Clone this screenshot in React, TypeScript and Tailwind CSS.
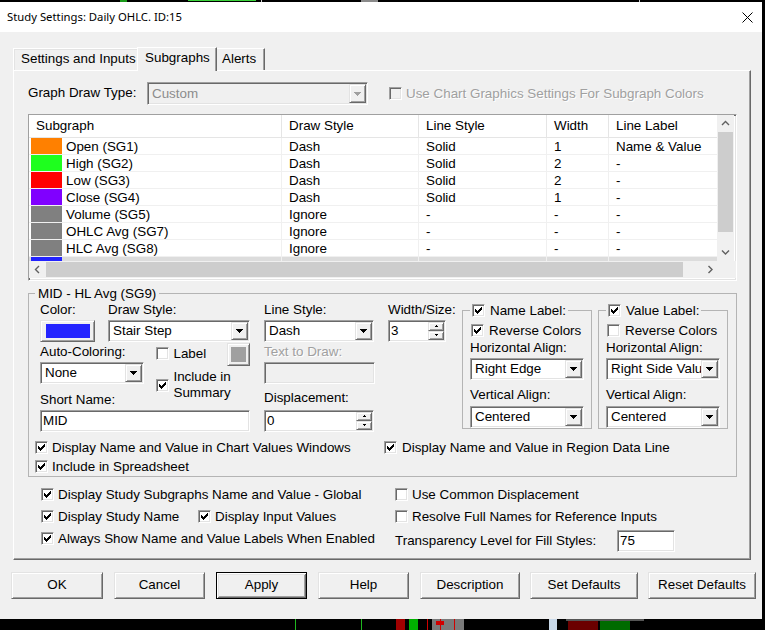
import React from 'react';

const SUNKEN =
  'border border-t-[#a0a0a0] border-l-[#a0a0a0] border-r-white border-b-white shadow-[inset_1px_1px_0_#696969,inset_-1px_-1px_0_#e3e3e3]';
const RAISED =
  'border border-t-[#e3e3e3] border-l-[#e3e3e3] border-r-[#696969] border-b-[#696969] shadow-[inset_1px_1px_0_#ffffff,inset_-1px_-1px_0_#a0a0a0] bg-[#f0f0f0]';
const DIS = 'text-[#a0a0a0] [text-shadow:1px_1px_0_#ffffff]';

function CheckMark() {
  return (
    <svg width="7" height="7" viewBox="0 0 7 7" shapeRendering="crispEdges">
      <path
        d="M6 0h1v1h-1zM5 1h2v1h-2zM0 2h1v1h-1zM4 2h3v1h-3zM0 3h2v1h-2zM3 3h3v1h-3zM0 4h5v1h-5zM1 5h3v1h-3zM2 6h1v1h-1z"
        fill="#000"
      />
    </svg>
  );
}

function Box({ checked = false, disabled = false }: { checked?: boolean; disabled?: boolean }) {
  return (
    <span
      className={`w-[13px] h-[13px] shrink-0 flex items-center justify-center ${SUNKEN} ${
        disabled ? 'bg-[#f0f0f0]' : 'bg-white'
      }`}
    >
      {checked && <CheckMark />}
    </span>
  );
}

function CB({
  label,
  checked = false,
  disabled = false,
  className = '',
}: {
  label: React.ReactNode;
  checked?: boolean;
  disabled?: boolean;
  className?: string;
}) {
  return (
    <div className={`flex items-center h-[15px] gap-[4px] ${className}`}>
      <Box checked={checked} disabled={disabled} />
      <span className={`whitespace-nowrap leading-[15px] ${disabled ? DIS : ''}`}>{label}</span>
    </div>
  );
}

function DownTri({ color = '#000' }: { color?: string }) {
  return (
    <svg width="7" height="4" viewBox="0 0 7 4" shapeRendering="crispEdges">
      <path d="M0 0h7v1h-7zM1 1h5v1h-5zM2 2h3v1h-3zM3 3h1v1h-1z" fill={color} />
    </svg>
  );
}

function TinyUp() {
  return (
    <svg width="5" height="3" viewBox="0 0 5 3" shapeRendering="crispEdges">
      <path d="M2 0h1v1h-1zM1 1h3v1h-3z" fill="#000" />
    </svg>
  );
}
function TinyDown() {
  return (
    <svg width="5" height="3" viewBox="0 0 5 3" shapeRendering="crispEdges">
      <path d="M1 0h3v1h-3zM2 1h1v1h-1z" fill="#000" />
    </svg>
  );
}

function Combo({
  value,
  className = '',
  disabled = false,
  tall = false,
}: {
  value: string;
  className?: string;
  disabled?: boolean;
  tall?: boolean;
}) {
  return (
    <div
      className={`${tall ? 'h-[23px]' : 'h-[22px]'} flex shrink-0 ${SUNKEN} ${
        disabled ? 'bg-[#f0f0f0]' : 'bg-white'
      } ${className}`}
    >
      <span
        className={`flex-1 min-w-0 pl-[4px] ${tall ? 'leading-[21px]' : 'leading-[20px]'} whitespace-nowrap overflow-hidden ${
          disabled ? 'text-[#8c8c8c]' : ''
        }`}
      >
        {value}
      </span>
      <span
        className={`w-[17px] ${tall ? 'h-[19px]' : 'h-[18px]'} mt-[1px] mr-[1px] flex items-center justify-center ${RAISED}`}
      >
        <DownTri color={disabled ? '#a0a0a0' : '#000'} />
      </span>
    </div>
  );
}

function Spin({ value, className = '' }: { value: string; className?: string }) {
  return (
    <div className={`h-[22px] flex bg-white shrink-0 ${SUNKEN} ${className}`}>
      <span className="flex-1 pl-[2px] leading-[20px]">{value}</span>
      <div className="w-[16px] h-[18px] mt-[1px] mr-[1px] flex flex-col">
        <span className={`h-[9px] flex items-center justify-center ${RAISED}`}>
          <TinyUp />
        </span>
        <span className={`h-[9px] flex items-center justify-center ${RAISED}`}>
          <TinyDown />
        </span>
      </div>
    </div>
  );
}

function Field({
  value = '',
  className = '',
  disabled = false,
}: {
  value?: string;
  className?: string;
  disabled?: boolean;
}) {
  return (
    <div
      className={`h-[22px] shrink-0 pl-[2px] leading-[20px] ${SUNKEN} ${
        disabled ? 'bg-[#f0f0f0]' : 'bg-white'
      } ${className}`}
    >
      {value}
    </div>
  );
}

function Label({ children, className = '' }: { children: React.ReactNode; className?: string }) {
  return <div className={`h-[18px] leading-[15px] whitespace-nowrap ${className}`}>{children}</div>;
}

function Chevron({ dir }: { dir: 'up' | 'down' | 'left' | 'right' }) {
  const pts = {
    up: '1,5 4.5,1.5 8,5',
    down: '1,1.5 4.5,5 8,1.5',
    left: '5,1 1.5,4.5 5,8',
    right: '1.5,1 5,4.5 1.5,8',
  }[dir];
  const w = dir === 'up' || dir === 'down' ? 9 : 7;
  const h = dir === 'up' || dir === 'down' ? 7 : 9;
  return (
    <svg width={w} height={h} viewBox={`0 0 ${w} ${h}`}>
      <polyline points={pts} fill="none" stroke="#606060" strokeWidth="1.4" />
    </svg>
  );
}

const rows = [
  { c: '#ff8000', n: 'Open (SG1)', d: 'Dash', l: 'Solid', w: '1', lab: 'Name & Value' },
  { c: '#1eff1e', n: 'High (SG2)', d: 'Dash', l: 'Solid', w: '2', lab: '-' },
  { c: '#ff0000', n: 'Low (SG3)', d: 'Dash', l: 'Solid', w: '2', lab: '-' },
  { c: '#8000ff', n: 'Close (SG4)', d: 'Dash', l: 'Solid', w: '1', lab: '-' },
  { c: '#808080', n: 'Volume (SG5)', d: 'Ignore', l: '-', w: '-', lab: '-' },
  { c: '#808080', n: 'OHLC Avg (SG7)', d: 'Ignore', l: '-', w: '-', lab: '-' },
  { c: '#808080', n: 'HLC Avg (SG8)', d: 'Ignore', l: '-', w: '-', lab: '-' },
  { c: '#2222ff', n: 'MID - HL Avg (SG9)', d: 'Stair Step', l: 'Dash', w: '3', lab: 'Name & Value' },
];

function Table() {
  return (
    <div className={`mt-[9px] w-[709px] h-[167px] flex flex-col bg-white ${SUNKEN}`}>
      <div className="flex h-[146px]">
        <div className="w-[688px] overflow-hidden">
          <div className="flex h-[23px] border-b border-[#e5e5e5] bg-white">
            <div className="w-[253px] shrink-0 pl-[7px] leading-[22px] border-r border-[#e5e5e5]">Subgraph</div>
            <div className="w-[137px] shrink-0 pl-[7px] leading-[22px] border-r border-[#e5e5e5]">Draw Style</div>
            <div className="w-[128px] shrink-0 pl-[7px] leading-[22px] border-r border-[#e5e5e5]">Line Style</div>
            <div className="w-[62px] shrink-0 pl-[7px] leading-[22px] border-r border-[#e5e5e5]">Width</div>
            <div className="w-[120px] shrink-0 pl-[7px] leading-[22px] border-r border-[#e5e5e5]">Line Label</div>
          </div>
          {rows.map((r, i) => (
            <div
              key={i}
              className={`flex h-[17px] border-b border-[#f0f0f0] ${i === 7 ? 'bg-[#dcdcdc]' : 'bg-white'}`}
            >
              <div className="w-[253px] shrink-0 flex border-r border-[#f0f0f0]">
                <span className="ml-[2px] w-[31px] h-[16px] shrink-0" style={{ backgroundColor: r.c }} />
                <span className="ml-[4px] leading-[17px] whitespace-nowrap">{r.n}</span>
              </div>
              <div className="w-[137px] shrink-0 pl-[7px] leading-[17px] border-r border-[#f0f0f0]">{r.d}</div>
              <div className="w-[128px] shrink-0 pl-[7px] leading-[17px] border-r border-[#f0f0f0]">{r.l}</div>
              <div className="w-[62px] shrink-0 pl-[7px] leading-[17px] border-r border-[#f0f0f0]">{r.w}</div>
              <div className="w-[120px] shrink-0 pl-[7px] leading-[17px] whitespace-nowrap">{r.lab}</div>
            </div>
          ))}
        </div>
        <div className="w-[17px] bg-[#f0f0f0] flex flex-col">
          <div className="h-[17px] flex items-center justify-center">
            <Chevron dir="up" />
          </div>
          <div className="h-[100px] mx-[1px] bg-[#cdcdcd]" />
          <div className="flex-1" />
          <div className="h-[17px] flex items-center justify-center">
            <Chevron dir="down" />
          </div>
        </div>
      </div>
      <div className="flex h-[17px] bg-[#f0f0f0]">
        <div className="w-[17px] flex items-center justify-center">
          <Chevron dir="left" />
        </div>
        <div className="w-[637px] my-[1px] bg-[#cdcdcd]" />
        <div className="flex-1" />
        <div className="w-[17px] flex items-center justify-center">
          <Chevron dir="right" />
        </div>
        <div className="w-[17px]" />
      </div>
    </div>
  );
}

function LabelGroup({
  title,
  titleChecked,
  reverse,
  hAlign,
  className = '',
}: {
  title: string;
  titleChecked: boolean;
  reverse: boolean;
  hAlign: string;
  className?: string;
}) {
  return (
    <div className={`relative mt-[8px] w-[130px] h-[119px] border border-[#b4b4b4] flex flex-col pl-[7px] ${className}`}>
      <div className="absolute -top-[8px] left-[7px] px-[2px] bg-[#f0f0f0]">
        <CB label={title} checked={titleChecked} className="gap-[5px]" />
      </div>
      <CB label="Reverse Colors" checked={reverse} className="mt-[12px] ml-[1px] gap-[5px]" />
      <div className="mt-[2px] h-[15px] leading-[15px] whitespace-nowrap">Horizontal Align:</div>
      <Combo value={hAlign} className="mt-[3px] w-[114px]" />
      <div className="mt-[7px] h-[15px] leading-[15px] whitespace-nowrap">Vertical Align:</div>
      <Combo value="Centered" className="mt-[4px] w-[114px]" />
    </div>
  );
}

function GroupBox() {
  return (
    <div className="mt-[12px] relative w-[709px] h-[184px] border border-[#b4b4b4] flex flex-col">
      <div className="absolute -top-[8px] left-[6px] px-[3px] bg-[#f0f0f0] leading-[15px]">MID - HL Avg (SG9)</div>
      <div className="pt-[8px] pl-[11px] flex">
        {/* col 1 */}
        <div className="w-[210px] flex flex-col">
          <div className="flex h-[40px]">
            <div className="w-[68px] flex flex-col">
              <Label>Color:</Label>
              <div className={`w-[55px] h-[22px] flex items-center justify-center ${RAISED}`}>
                <span className="w-[44px] h-[14px] bg-[#2424ff]" />
              </div>
            </div>
            <div className="w-[142px] flex flex-col">
              <Label>Draw Style:</Label>
              <Combo value="Stair Step" className="w-[142px]" />
            </div>
          </div>
          <div className="mt-[2px] h-[48px] flex">
            <div className="w-[117px] flex flex-col">
              <Label>Auto-Coloring:</Label>
              <Combo value="None" className="w-[104px]" />
            </div>
            <div className="w-[94px] -mt-[1px] flex flex-col">
              <div className="h-[23px] flex items-start">
                <CB label="Label" className="mt-[3px] gap-[4px]" />
                <div className={`ml-auto w-[23px] h-[23px] flex items-center justify-center ${RAISED}`}>
                  <span className="w-[15px] h-[15px] bg-[#a0a0a0]" />
                </div>
              </div>
              <div className="mt-[3px] flex items-center gap-[4px]">
                <Box checked />
                <span className="leading-[16px]">
                  Include in
                  <br />
                  Summary
                </span>
              </div>
            </div>
          </div>
          <div className="h-[40px] flex flex-col">
            <Label>Short Name:</Label>
            <Field value="MID" className="w-[210px]" />
          </div>
        </div>
        {/* col 2 */}
        <div className="ml-[14px] w-[111px] flex flex-col">
          <Label>Line Style:</Label>
          <Combo value="Dash" className="w-[110px]" />
          <Label className={`mt-[2px] ${DIS}`}>Text to Draw:</Label>
          <Field disabled className="w-[111px]" />
          <div className="mt-[6px] h-[20px] leading-[15px]">Displacement:</div>
          <Spin value="0" className="w-[110px]" />
        </div>
        {/* col 3 */}
        <div className="ml-[13px] w-[58px] flex flex-col">
          <Label>Width/Size:</Label>
          <Spin value="3" className="w-[58px]" />
        </div>
        <LabelGroup title="Name Label:" titleChecked reverse hAlign="Right Edge" className="ml-[16px]" />
        <LabelGroup title="Value Label:" titleChecked reverse={false} hAlign="Right Side Value" className="ml-[6px]" />
      </div>
      <div className="mt-[8px] pl-[6px] flex">
        <div className="w-[349px]">
          <CB label="Display Name and Value in Chart Values Windows" checked />
        </div>
        <CB label="Display Name and Value in Region Data Line" checked className="gap-[5px]" />
      </div>
      <div className="mt-[4px] pl-[6px]">
        <CB label="Include in Spreadsheet" checked />
      </div>
    </div>
  );
}

function Btn({ children, className = '', def = false }: { children: React.ReactNode; className?: string; def?: boolean }) {
  return (
    <div
      className={`h-[27px] shrink-0 flex items-center justify-center bg-[#f0f0f0] ${
        def
          ? 'border border-black shadow-[inset_1px_1px_0_#ffffff,inset_-1px_-1px_0_#696969,inset_2px_2px_0_#e3e3e3,inset_-2px_-2px_0_#a0a0a0]'
          : RAISED
      } ${className}`}
    >
      {children}
    </div>
  );
}

export default function App() {
  return (
    <div className="relative w-[765px] h-[630px] bg-black overflow-hidden pt-[2px] text-[13.4px] text-black font-['Liberation_Sans',Arial,sans-serif]">
      {/* chart behind the dialog: top strip */}
      <div className="absolute top-0 left-[120px] w-[7px] h-[2px] bg-[#1a9a1a]" />
      <div className="absolute top-0 left-[188px] w-[68px] h-[1px] bg-[#3ad33a]" />
      <div className="absolute top-0 left-[261px] w-[1px] h-[2px] bg-[#d0d0d0]" />
      <div className="absolute top-0 left-[361px] w-[17px] h-[2px] bg-[#8a8a8a]" />
      <div className="absolute top-0 left-[639px] w-[1px] h-[2px] bg-[#d0d0d0]" />
      {/* bottom strip */}
      <div className="absolute top-[619px] left-[295px] w-[1px] h-[11px] bg-[#1fb81f]" />
      <div className="absolute top-[619px] left-[361px] w-[1px] h-[11px] bg-[#1fb81f]" />
      <div className="absolute top-[619px] left-[396px] w-[9px] h-[11px] bg-[#a00000]" />
      <div className="absolute top-[619px] left-[409px] w-[9px] h-[11px] bg-[#00b000]" />
      <div className="absolute top-[619px] left-[427px] w-[1px] h-[11px] bg-[#d00000]" />
      <div className="absolute top-[619px] left-[432px] w-[32px] h-[11px] bg-[#7a7a7a]" />
      <div className="absolute top-[621px] left-[436px] w-[8px] h-[4px] bg-[#d00000]" />
      <div className="absolute top-[619px] left-[440px] w-[1px] h-[11px] bg-[#d00000]" />
      <div className="absolute top-[619px] left-[454px] w-[1px] h-[11px] bg-[#d00000]" />
      <div className="absolute top-[619px] left-[549px] w-[8px] h-[11px] bg-[#c8d8e8]" />
      <div className="absolute top-[619px] left-[566px] w-[78px] h-[2px] bg-[#555555]" />
      <div className="absolute top-[621px] left-[568px] w-[30px] h-[9px] bg-[#6b0000]" />
      <div className="absolute top-[621px] left-[600px] w-[30px] h-[9px] bg-[#006b00]" />

      <div className="relative w-[762px] h-[617px] bg-[#f0f0f0] flex flex-col">
        {/* title bar */}
        <div className="h-[30px] bg-white flex items-center pl-[7px] pr-[9px]">
          <span className="text-[11.3px] font-['Noto_Sans',sans-serif] leading-[16px]">
            Study Settings: Daily OHLC. ID:15
          </span>
          <svg className="ml-auto" width="11" height="11" viewBox="0 0 11 11">
            <path d="M0.5 0.5 L10.5 10.5 M10.5 0.5 L0.5 10.5" stroke="#000" strokeWidth="1" />
          </svg>
        </div>

        {/* tabs */}
        <div className="relative z-10 mt-[15px] ml-[13px] h-[23px] flex items-end">
          <div className="h-[22px] w-[126px] pl-[7px] flex items-center border-t border-l border-white shadow-[inset_1px_1px_0_#e3e3e3] whitespace-nowrap">
            Settings and Inputs
          </div>
          <div className="relative z-10 -ml-[2px] -mb-[1px] h-[24px] w-[80px] pl-[7px] pb-[3px] flex items-center bg-[#f0f0f0] border-t border-l border-white border-r border-r-[#696969] shadow-[inset_-1px_0_0_#a0a0a0] whitespace-nowrap">
            Subgraphs
          </div>
          <div className="h-[22px] w-[48px] pl-[5px] flex items-center border-t border-white border-r border-r-[#696969] shadow-[inset_-1px_0_0_#a0a0a0] whitespace-nowrap">
            Alerts
          </div>
        </div>

        {/* panel */}
        <div className="ml-[13px] w-[738px] h-[490px] shrink-0 border border-t-white border-l-white border-r-[#696969] border-b-[#696969] shadow-[inset_-1px_-1px_0_#a0a0a0] flex flex-col pl-[14px]">
          <div className="mt-[11px] h-[23px] flex items-center">
            <div className="w-[119px] whitespace-nowrap">Graph Draw Type:</div>
            <Combo value="Custom" disabled tall className="w-[221px]" />
            <CB label="Use Chart Graphics Settings For Subgraph Colors" disabled className="ml-[21px] gap-[4px]" />
          </div>
          <Table />
          <GroupBox />
          <div className="mt-[10px] pl-[13px] flex">
            <div className="w-[354px] flex flex-col gap-[7px]">
              <CB label="Display Study Subgraphs Name and Value - Global" checked />
              <div className="flex">
                <div className="w-[157px]">
                  <CB label="Display Study Name" checked />
                </div>
                <CB label="Display Input Values" checked />
              </div>
              <CB label="Always Show Name and Value Labels When Enabled" checked />
            </div>
            <div className="flex flex-col">
              <CB label="Use Common Displacement" />
              <CB label="Resolve Full Names for Reference Inputs" className="mt-[7px]" />
              <div className="mt-[6px] h-[22px] flex items-center">
                <div className="w-[222px] whitespace-nowrap">Transparency Level for Fill Styles:</div>
                <Field value="75" className="w-[58px]" />
              </div>
            </div>
          </div>
        </div>

        {/* buttons */}
        <div className="mt-[12px] pl-[11px] flex">
          <Btn className="w-[92px]">OK</Btn>
          <Btn className="ml-[11px] w-[91px]">Cancel</Btn>
          <Btn def className="ml-[11px] w-[91px]">Apply</Btn>
          <Btn className="ml-[11px] w-[91px]">Help</Btn>
          <Btn className="ml-[11px] w-[100px]">Description</Btn>
          <Btn className="ml-[10px] w-[108px]">Set Defaults</Btn>
          <Btn className="ml-[10px] w-[108px]">Reset Defaults</Btn>
        </div>
      </div>
    </div>
  );
}
